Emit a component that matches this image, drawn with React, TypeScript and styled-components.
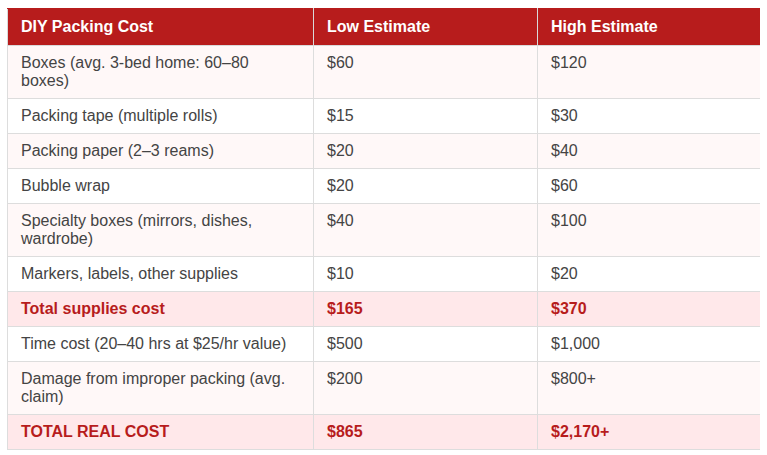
import React from "react";
import styled, { createGlobalStyle } from "styled-components";

const Global = createGlobalStyle`
  body {
    margin: 8px 7px;
    background: #ffffff;
    font-family: "Liberation Sans", Arial, sans-serif;
  }
`;

const Table = styled.table`
  width: 100%;
  border-collapse: collapse;
  table-layout: fixed;
  font-size: 16px;
  line-height: 18px;
  color: #444444;
`;

const HeadCell = styled.th`
  background: #b71c1c;
  color: #ffffff;
  font-weight: 700;
  text-align: left;
  padding: 9px 16px 9px 13px;
  border: 1px solid #d9d9d9;
  border-top-color: #b71c1c;
`;

const Row = styled.tr<{ $total?: boolean }>`
  background: ${(p) => (p.$total ? "#ffe8ea" : "#ffffff")};
  &:nth-child(odd) {
    background: ${(p) => (p.$total ? "#ffe8ea" : "#fff8f8")};
  }
  color: ${(p) => (p.$total ? "#b71c1c" : "#444444")};
  font-weight: ${(p) => (p.$total ? 700 : 400)};
`;

const Cell = styled.td`
  padding: 8px 16px 8px 13px;
  border: 1px solid #dddddd;
  vertical-align: top;
`;

const rows: { label: string; low: string; high: string; total?: boolean }[] = [
  { label: "Boxes (avg. 3-bed home: 60–80 boxes)", low: "$60", high: "$120" },
  { label: "Packing tape (multiple rolls)", low: "$15", high: "$30" },
  { label: "Packing paper (2–3 reams)", low: "$20", high: "$40" },
  { label: "Bubble wrap", low: "$20", high: "$60" },
  { label: "Specialty boxes (mirrors, dishes, wardrobe)", low: "$40", high: "$100" },
  { label: "Markers, labels, other supplies", low: "$10", high: "$20" },
  { label: "Total supplies cost", low: "$165", high: "$370", total: true },
  { label: "Time cost (20–40 hrs at $25/hr value)", low: "$500", high: "$1,000" },
  { label: "Damage from improper packing (avg. claim)", low: "$200", high: "$800+" },
  { label: "TOTAL REAL COST", low: "$865", high: "$2,170+", total: true },
];

export default function App() {
  return (
    <>
      <Global />
      <Table>
        <colgroup>
          <col style={{ width: 306 }} />
          <col style={{ width: 224 }} />
          <col style={{ width: 223 }} />
        </colgroup>
        <thead>
          <tr>
            <HeadCell>DIY Packing Cost</HeadCell>
            <HeadCell>Low Estimate</HeadCell>
            <HeadCell>High Estimate</HeadCell>
          </tr>
        </thead>
        <tbody>
          {rows.map((r) => (
            <Row key={r.label} $total={r.total}>
              <Cell>{r.label}</Cell>
              <Cell>{r.low}</Cell>
              <Cell>{r.high}</Cell>
            </Row>
          ))}
        </tbody>
      </Table>
    </>
  );
}
